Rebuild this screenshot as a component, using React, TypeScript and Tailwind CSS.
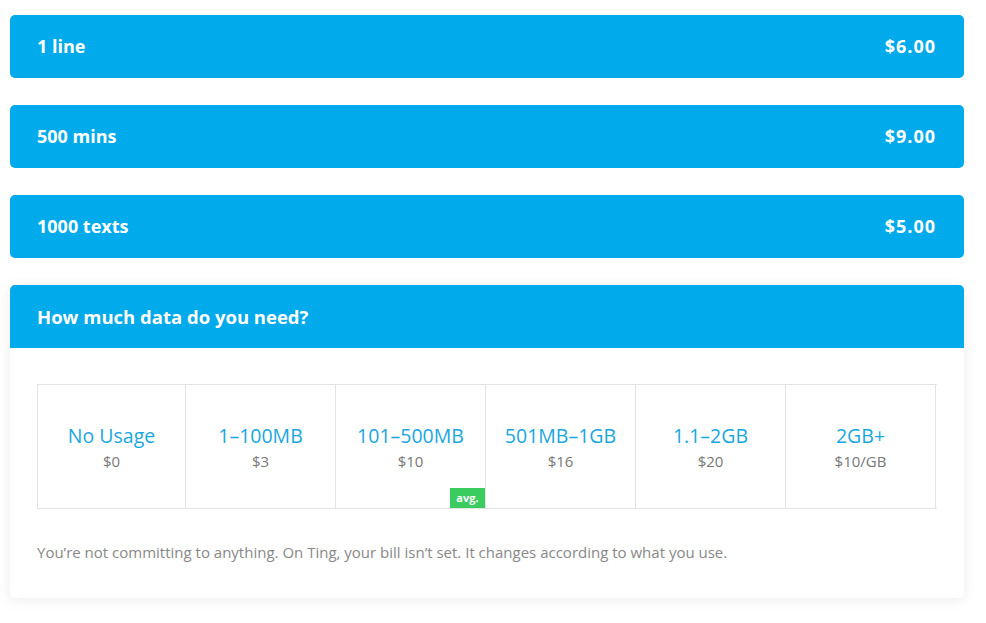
import React from "react";

const bars = [
  { label: "1 line", price: "$6.00" },
  { label: "500 mins", price: "$9.00" },
  { label: "1000 texts", price: "$5.00" },
];

const tiers = [
  { t: "No Usage", p: "$0" },
  { t: "1–100MB", p: "$3" },
  { t: "101–500MB", p: "$10", avg: true },
  { t: "501MB–1GB", p: "$16" },
  { t: "1.1–2GB", p: "$20" },
  { t: "2GB+", p: "$10/GB" },
];

export default function App() {
  return (
    <div
      className="w-[986px] h-[623px] bg-white pt-[15px] pl-[10px] pr-[22px]"
      style={{ fontFamily: "'Open Sans', Lato, sans-serif" }}
    >
      <div className="flex flex-col gap-[27px]">
        {bars.map((b) => (
          <div
            key={b.label}
            className="h-[63px] rounded-[5px] bg-[#00aaeb] flex items-center justify-between px-[27px] text-white font-bold text-[18px]"
          >
            <span>{b.label}</span>
            <span className="tracking-[1px] pr-px">{b.price}</span>
          </div>
        ))}
        <div className="rounded-[5px] bg-white shadow-[0_2px_14px_rgba(0,0,0,0.08)]">
          <div className="h-[63px] rounded-t-[5px] bg-[#00aaeb] flex items-center px-[27px] text-white font-bold text-[18.5px]">
            How much data do you need?
          </div>
          <div className="pt-[36px] pb-[36px] px-[27px]">
            <div className="grid grid-cols-[148px_repeat(5,150px)] border-l border-y border-[#e3e3e3] h-[125px]">
              {tiers.map((x) => (
                <div
                  key={x.t}
                  className="relative flex flex-col items-center justify-center border-r border-[#e3e3e3]"
                >
                  <div className="text-[19.5px] text-[#1aa7de] leading-[26px] mt-0">{x.t}</div>
                  <div className="text-[15px] text-[#777777] leading-[20px] mt-[2px]">{x.p}</div>
                  {x.avg && (
                    <div className="absolute right-0 bottom-0 w-[35px] h-[20px] bg-[#3bcc5f] text-white text-[11px] font-bold flex items-center justify-center">
                      avg.
                    </div>
                  )}
                </div>
              ))}
            </div>
            <p className="mt-[33px] text-[15px] text-[#888888] leading-[20px]">
              You’re not committing to anything. On Ting, your bill isn’t set. It changes according to what you use.
            </p>
          </div>
        </div>
      </div>
    </div>
  );
}
